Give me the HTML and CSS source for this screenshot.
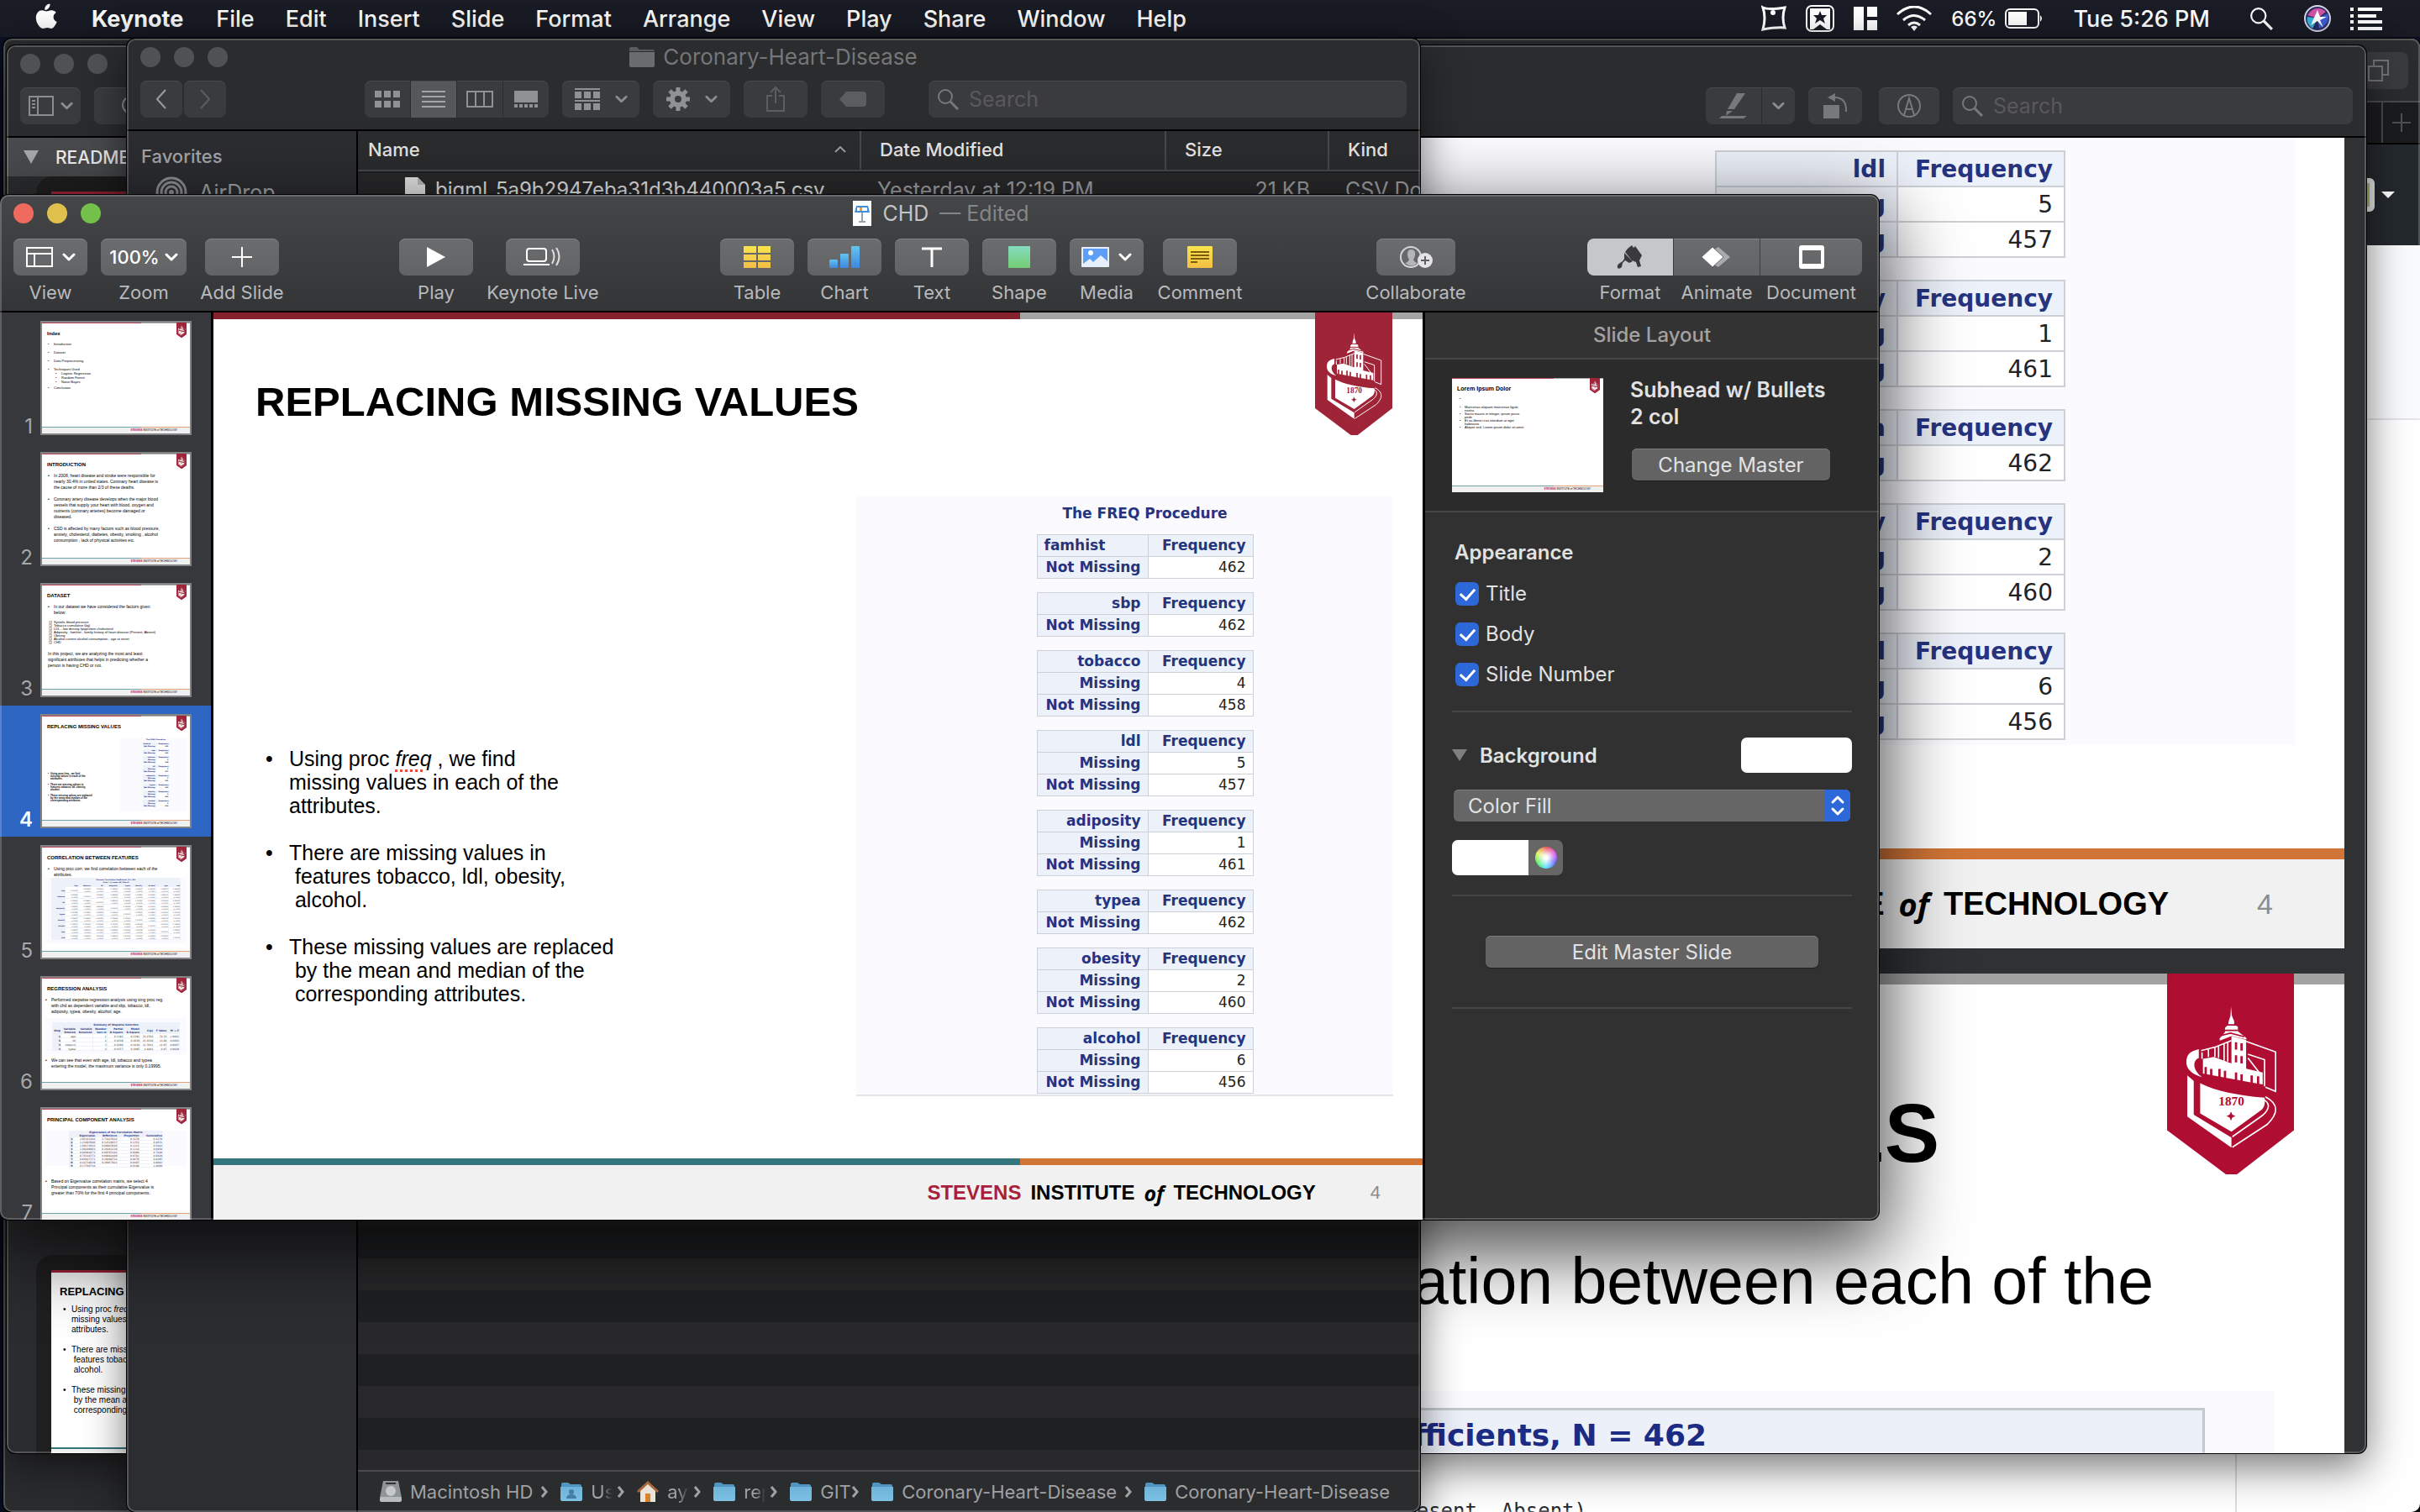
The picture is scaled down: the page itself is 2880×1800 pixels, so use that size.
FILE: index.html
```html
<!DOCTYPE html>
<html lang="en">
<head>
<meta charset="utf-8">
<title>Keynote - CHD</title>
<link rel="stylesheet" href="styles.css">
</head>
<body>
<svg class="defs" width="0" height="0" aria-hidden="true">
  <defs>
    <linearGradient id="gFolder" x1="0" y1="0" x2="0" y2="1"><stop offset="0" stop-color="#6fb3d9"/><stop offset="1" stop-color="#7cc0e4"/></linearGradient>
    <linearGradient id="gYellow" x1="0" y1="0" x2="0" y2="1"><stop offset="0" stop-color="#fae54d"/><stop offset="1" stop-color="#f4bd45"/></linearGradient>
    <linearGradient id="gBlue" x1="0" y1="0" x2="0" y2="1"><stop offset="0" stop-color="#63c5ee"/><stop offset="1" stop-color="#3f86e0"/></linearGradient>
    <linearGradient id="gGreen" x1="0" y1="0" x2="0" y2="1"><stop offset="0" stop-color="#85dcc0"/><stop offset="1" stop-color="#74cc74"/></linearGradient>
    <symbol id="ribbon" viewBox="0 0 276 438" preserveAspectRatio="none">
      <path fill="currentColor" d="M0 0h276v342L152 438h-24L0 342z"/>
      <g fill="#fff">
        <path d="M139 72l2 20 5 12 0 8 8 4 0 10 18 14 1 4-32-8-26 10-1-4 12-14 0-10 7-6 1-8 4-12z"/>
        <path d="M140 136l32 9v64l-32-9z"/>
        <path d="M69 165C52 170 42 174 42 194c0 14 12 26 34 32-20-14-22-36-7-42z"/>
        <path d="M78 186l24-4 38 14 34 12 34 8v26l-24-4-106-20z"/>
        <path d="M44 222l14 12 0 74 82 50v22L44 312z"/>
        <path d="M72 239c36 18 80 26 140 32 2 12 0 20-6 26l-66 48-68-40z"/>
      </g>
      <g fill="none" stroke="#fff" stroke-width="3">
        <path d="M74 168l32-8 34-14M76 172l0 14M90 166v16M104 160v22M112 158v26M124 152v38M132 150v42"/>
        <path d="M172 148l64 23v86l-22-9M176 176l36 12v58M176 184l26 34"/>
        <path d="M214 269c30 16 28 36 4 60l-76 50M212 276c16 10 6 26-8 36l-62 44"/>
      </g>
      <g fill="none" stroke="currentColor" stroke-width="5">
        <path d="M150 150v16M162 152v16M150 178v16M162 180v16M84 204v16M96 208v14M114 208v18M126 212v18M150 216v18M162 220v16M184 222v18M198 224v18"/>
        <path d="M128 112h22M124 124h30M114 136l24-6 30 8" stroke-width="3"/>
      </g>
      <text x="140" y="288" text-anchor="middle" font-family="Liberation Serif, serif" font-weight="700" font-size="28" fill="currentColor">1870</text>
      <path fill="currentColor" d="M139 301l3 7 7 3-7 3-3 7-3-7-7-3 7-3z"/>
    </symbol>
    <symbol id="folder" viewBox="0 0 26 22"><path fill="#4f97c2" d="M1 2q0-2 2-2h6l3 2h11q2 0 2 2v4H1z"/><path fill="url(#gFolder)" d="M0 5h26v15q0 2-2 2H2q-2 0-2-2z"/></symbol>
    <symbol id="chev" viewBox="0 0 16 10"><path fill="none" stroke="currentColor" stroke-width="3" stroke-linecap="round" stroke-linejoin="round" d="M2 2l6 6 6-6"/></symbol>
    <symbol id="mag" viewBox="0 0 26 26"><circle cx="10" cy="10" r="8" fill="none" stroke="currentColor" stroke-width="2"/><path stroke="currentColor" stroke-width="3" d="M16 16l9 9"/></symbol>
    <symbol id="sep" viewBox="0 0 8 14"><path fill="none" stroke="currentColor" stroke-width="3" d="M1 1l5 6-5 6"/></symbol>
  </defs>
</svg>

<header class="menubar">
  <nav class="menus">
    <svg class="apple" viewBox="0 0 26 32" width="26" height="32"><path fill="#fff" d="M17.500 0.500c.3 2-.6 4-1.800 5.400-1.200 1.300-2.800 2-4.400 1.900-.3-2 .6-3.900 1.700-5.200C14.200 1.300 16 .5 17.500.5zM24.800 11c-2 1.200-3.200 3-3.200 5.300 0 2.700 1.600 4.800 4 5.700-1.200 3.600-4 8-6.600 8-1.600 0-2.600-1-4.800-1-2.200 0-3.300 1-4.800 1C5.800 30 .8 23.500.8 17.200c0-5.600 3.500-9 7.200-9 2 0 4 1.300 5.300 1.300 1.200 0 3.500-1.500 6.100-1.300 2.200.1 4.200 1 5.400 2.800z"/></svg>
    <a href="#" class="app">Keynote</a><a href="#">File</a><a href="#">Edit</a><a href="#">Insert</a><a href="#">Slide</a><a href="#">Format</a><a href="#">Arrange</a><a href="#">View</a><a href="#">Play</a><a href="#">Share</a><a href="#">Window</a><a href="#">Help</a>
  </nav>
  <div class="status">
    <svg width="30" height="32" viewBox="0 0 30 32"><path fill="none" stroke="#fff" stroke-width="3" d="M2 3q6 3 26 0-4 12 0 24-10-1-26 2 4-14 0-26z"/><circle cx="14" cy="9" r="3" fill="#fff"/></svg>
    <svg width="34" height="32" viewBox="0 0 34 32"><rect x="1" y="1" width="32" height="30" rx="6" fill="none" stroke="#fff" stroke-width="2"/><path fill="#fff" d="M5 4h24v25H25l-8-6-8 6H5z"/><path fill="#1a1d26" d="M17 7l2 5h6l-4 4 2 6-6-4-6 4 2-6-4-4h6z"/></svg>
    <svg width="28" height="28" viewBox="0 0 28 28"><path fill="#fff" d="M0 0h12v28H0zM16 0h12v12H16zM16 16h12v12H16z"/></svg>
    <svg width="42" height="30" viewBox="0 0 42 30"><g fill="none" stroke="#fff" stroke-width="3"><path d="M1 10q20-18 40 0M8 17q13-11 26 0M14 23q7-6 14 0"/></g><path fill="#fff" d="M17 25q4-3 8 0l-4 5z"/></svg>
    <span class="batt">66%<svg width="46" height="26" viewBox="0 0 46 26"><rect x="1" y="2" width="39" height="22" rx="5" fill="none" stroke="#fff" stroke-width="2"/><path fill="#fff" d="M4 5h22v16H4zM42 9q4 4 0 8z"/></svg></span>
    <time>Tue 5:26 PM</time>
    <svg class="lens" width="28" height="28"><use href="#mag"/></svg>
    <svg width="32" height="32" viewBox="0 0 32 32"><circle cx="16" cy="16" r="15" fill="#2b2d63" stroke="#d8d8e8" stroke-width="2"/><path fill="#d252a6" d="M4 12q10-14 22-4l-10 8z"/><path fill="#35b6dc" d="M4 14l12 2-6 12q-8-6-6-14z"/><path fill="#3c5fd6" d="M16 16l12-6q4 12-10 18z"/><path fill="#fff" d="M8 24l8-18 3 8 8 0-8 4 4 9-7-8z"/></svg>
    <svg width="38" height="28" viewBox="0 0 38 28"><path stroke="#fff" stroke-width="4" d="M0 3h4M9 3h29M0 11h4M9 11h22M0 18h4M9 18h29M0 26h4M9 26h29"/></svg>
  </div>
</header>

<main class="desktop">
  <!-- Browser window -->
  <section class="window browser">
    <div class="b-tools"><button aria-label="Show tabs"><svg width="26" height="26" viewBox="0 0 26 26"><path fill="none" stroke="#737476" stroke-width="2" d="M1 8h16v17H1zM7 8V1h17v17h-7"/></svg></button></div>
    <div class="b-tabs"><button aria-label="New tab"><svg width="22" height="22" viewBox="0 0 22 22"><path stroke="#4e4f51" stroke-width="2" d="M11 0v22M0 11h22"/></svg></button></div>
    <div class="b-head"><span class="avatar"></span><svg width="16" height="8" viewBox="0 0 16 8"><path fill="#fff" d="M0 0h16L8 8z"/></svg></div>
    <div class="b-repo"></div>
    <div class="b-page"><pre>famhist - family history of heart disease (Present, Absent)</pre></div>
  </section>

  <!-- Second Finder window, almost fully covered -->
  <section class="window under"></section>

  <!-- Preview window -->
  <section class="window preview">
    <div class="p-tools">
      <div class="lights"><i></i><i></i><i></i></div>
      <div class="p-row">
        <button class="tool" aria-label="Sidebar"><svg width="30" height="24" viewBox="0 0 30 24"><path fill="none" stroke="#8b8c8e" stroke-width="2" d="M1 1h28v22H1zM11 1v22M4 6h4M4 10h4M4 14h4"/></svg><svg class="c" width="15" height="10"><use href="#chev"/></svg></button>
        <button class="tool zoomout" aria-label="Zoom out"><svg width="26" height="26" viewBox="0 0 26 26"><circle cx="12" cy="12" r="10" fill="none" stroke="#8b8c8e" stroke-width="2"/><path stroke="#8b8c8e" stroke-width="2" d="M7 12h10"/></svg></button>
        <span class="grow"></span>
        <span class="split"><button class="tool" aria-label="Highlight"><svg width="36" height="32" viewBox="0 0 36 32"><path fill="#77787a" d="M22 1h10L19 20h-8zM10 22h7l-8 6zM4 28h30l-4 3H1z"/></svg></button><button class="tool" aria-label="Highlight colors"><svg class="c" width="15" height="10"><use href="#chev"/></svg></button></span>
        <button class="tool rot" aria-label="Rotate"><svg width="30" height="30" viewBox="0 0 30 30"><path fill="#77787a" d="M1 14h19v16H1zM6 5l9-5v10z"/><path fill="none" stroke="#77787a" stroke-width="2" d="M14 5q15 0 14 17"/></svg></button>
        <button class="tool mark" aria-label="Markup"><svg width="30" height="30" viewBox="0 0 30 30"><circle cx="15" cy="15" r="13" fill="none" stroke="#77787a" stroke-width="2"/><path fill="none" stroke="#77787a" stroke-width="2" d="M9 26l6-20 6 20M11 19h8"/></svg></button>
        <label class="search"><svg width="26" height="26"><use href="#mag"/></svg><input type="search" placeholder="Search" aria-label="Search document"></label>
      </div>
    </div>
    <div class="p-body">
      <aside class="p-side">
        <div class="p-file"><svg width="18" height="16" viewBox="0 0 18 16"><path fill="#a9aaab" d="M0 0h18L9 16z"/></svg>README</div>
        <div class="p-thumbs">
          <div class="p-thumb"><div class="p-slide"><h4>DATASET</h4></div></div>
          <div class="p-thumb"><div class="p-slide"><h4>REPLACING MISSING VALUES</h4>
            <ul><li>Using proc <em>freq</em> , we find<br>missing values in each of the<br>attributes.</li><li>There are missing values in<br>&nbsp;features tobacco, ldl, obesity,<br>&nbsp;alcohol.</li><li>These missing values are replaced<br>&nbsp;by the mean and median of the<br>&nbsp;corresponding attributes.</li></ul>
            <div class="p-foot"></div></div></div>
        </div>
      </aside>
      <div class="p-view">
        <article class="page">
          <div class="p-fig freq big" data-from="3"></div>
          <footer class="brandline"><span class="brand"><b class="red">STEVENS</b><b>INSTITUTE</b><i>of</i><b>TECHNOLOGY</b></span><span class="num">4</span></footer>
        </article>
        <article class="page two">
          <svg class="ribbon"><use href="#ribbon"/></svg>
          <h2>CORRELATION BETWEEN FEATURES</h2>
          <p>Using proc corr, we find correlation between each of the</p>
          <div class="p-corr"><div>Pearson Correlation Coefficients, N = 462</div></div>
        </article>
      </div>
    </div>
  </section>

  <!-- Finder window -->
  <section class="window finder">
    <div class="f-tools">
      <div class="f-title"><div class="lights"><i></i><i></i><i></i></div><h1><svg width="30" height="24" viewBox="0 0 30 24"><path fill="#5a5b5d" d="M0 2q0-2 2-2h7l3 3h16q2 0 2 2H0z"/><path fill="#6b6c6e" d="M0 6h30v16q0 2-2 2H2q-2 0-2-2z"/></svg>Coronary-Heart-Disease</h1></div>
      <div class="f-row">
        <span class="pair"><button class="tool" aria-label="Back"><svg width="12" height="24" viewBox="0 0 12 24"><path fill="none" stroke="#9a9b9d" stroke-width="2" d="M11 1L1 12l10 11"/></svg></button><button class="tool" aria-label="Forward"><svg width="12" height="24" viewBox="0 0 12 24"><path fill="none" stroke="#5c5d5f" stroke-width="2" d="M1 1l10 11L1 23"/></svg></button></span>
        <span class="split views">
          <button class="tool" aria-label="Icons"><svg width="30" height="20" viewBox="0 0 30 20"><path fill="#909193" d="M0 0h8v8H0zM11 0h8v8h-8zM22 0h8v8h-8zM0 12h8v8H0zM11 12h8v8h-8zM22 12h8v8h-8z"/></svg></button>
          <button class="tool on" aria-label="List"><svg width="28" height="20" viewBox="0 0 28 20"><path stroke="#a4a5a7" stroke-width="2" d="M0 1h28M0 7h28M0 13h28M0 19h28"/></svg></button>
          <button class="tool" aria-label="Columns"><svg width="32" height="20" viewBox="0 0 32 20"><path fill="none" stroke="#909193" stroke-width="2" d="M1 1h30v18H1zM11 1v18M21 1v18"/></svg></button>
          <button class="tool" aria-label="Gallery"><svg width="28" height="20" viewBox="0 0 28 20"><path fill="#909193" d="M0 0h28v14H0zM0 16h4v4H0zM6 16h4v4H6zM12 16h4v4h-4zM18 16h4v4h-4zM24 16h4v4h-4z"/></svg></button>
        </span>
        <button class="tool wide" aria-label="Group"><svg width="30" height="26" viewBox="0 0 30 26"><path fill="#909193" d="M0 0h30v2H0zM0 4h8v8H0zM11 4h8v8h-8zM22 4h8v8h-8zM0 14h30v2H0zM0 18h8v8H0zM11 18h8v8h-8zM22 18h8v8h-8z"/></svg><svg class="c" width="15" height="10"><use href="#chev"/></svg></button>
        <button class="tool wide" aria-label="Actions"><svg width="28" height="28" viewBox="0 0 28 28"><circle cx="14" cy="14" r="7" fill="none" stroke="#909193" stroke-width="6"/><g stroke="#909193" stroke-width="5"><path d="M14 0v6M14 22v6M0 14h6M22 14h6M4 4l4 4M20 20l4 4M24 4l-4 4M4 24l4-4"/></g></svg><svg class="c" width="15" height="10"><use href="#chev"/></svg></button>
        <button class="tool share" aria-label="Share"><svg width="22" height="30" viewBox="0 0 22 30"><path fill="none" stroke="#5c5d5f" stroke-width="2" d="M7 11H1v18h20V11h-6M11 20V1M5 7l6-6 6 6"/></svg></button>
        <button class="tool share" aria-label="Tags"><svg width="32" height="18" viewBox="0 0 32 18"><path fill="#5c5d5f" d="M8 0h20q4 0 4 4v10q0 4-4 4H8L0 9z"/></svg></button>
        <label class="search"><svg width="26" height="26"><use href="#mag"/></svg><input type="search" placeholder="Search" aria-label="Search folder"></label>
      </div>
    </div>
    <div class="f-body">
      <aside class="f-side"><h2>Favorites</h2><a href="#"><svg width="38" height="38" viewBox="0 0 38 38"><g fill="none" stroke="#8e8f91" stroke-width="3"><circle cx="19" cy="19" r="17"/><circle cx="19" cy="19" r="12"/><circle cx="19" cy="19" r="7"/></g><circle cx="19" cy="19" r="3" fill="#8e8f91"/></svg>AirDrop</a></aside>
      <div class="f-list">
        <table class="files">
          <colgroup><col class="c1"><col class="c2"><col class="c3"><col class="c4"></colgroup>
          <thead><tr><th><span>Name<svg width="14" height="8" viewBox="0 0 14 8"><path fill="none" stroke="#9a9b9d" stroke-width="2" d="M1 7l6-6 6 6"/></svg></span></th><th>Date Modified</th><th>Size</th><th>Kind</th></tr></thead>
          <tbody><tr><td class="fname"><svg width="24" height="30" viewBox="0 0 24 30"><path fill="#e8e8e8" d="M0 0h15l9 9v21H0z"/><path fill="#bbb" d="M15 0v9h9z"/></svg>bigml_5a9b2947eba31d3b440003a5.csv</td><td>Yesterday at 12:19 PM</td><td class="size">21 KB</td><td>CSV Document</td></tr></tbody>
        </table>
        <nav class="path">
          <svg width="26" height="26" viewBox="0 0 26 26"><path fill="#8f9496" d="M4 0h18l4 20H0z"/><rect y="19" width="26" height="6" rx="2" fill="#b9bdbf"/><circle cx="13" cy="12" r="6" fill="#c6cacc"/><path fill="#333" d="M7 2h12v2H7z"/></svg><span>Macintosh HD</span><svg class="s"><use href="#sep"/></svg>
          <svg class="fo" viewBox="0 0 26 24"><use href="#folder" width="26" height="24"/><circle cx="13" cy="12" r="3" fill="#4480a6"/><path fill="#4480a6" d="M7 20q0-5 6-5t6 5z"/></svg><span class="cut">Users</span><svg class="s"><use href="#sep"/></svg>
          <svg width="26" height="26" viewBox="0 0 26 26"><path fill="#e9e4da" d="M4 11l9-9 9 9v14H4z"/><path fill="none" stroke="#a8683c" stroke-width="3" d="M1 13L13 2l12 11"/><path fill="#d9822b" d="M10 15h6v10h-6z"/></svg><span class="cut">ayush</span><svg class="s"><use href="#sep"/></svg>
          <svg class="fo"><use href="#folder"/></svg><span class="cut">repos</span><svg class="s"><use href="#sep"/></svg>
          <svg class="fo"><use href="#folder"/></svg><span class="cut git">GIT</span><svg class="s"><use href="#sep"/></svg>
          <svg class="fo"><use href="#folder"/></svg><span>Coronary-Heart-Disease</span><svg class="s"><use href="#sep"/></svg>
          <svg class="fo"><use href="#folder"/></svg><span>Coronary-Heart-Disease</span>
        </nav>
      </div>
    </div>
  </section>

  <!-- Keynote window -->
  <section class="window keynote">
    <div class="k-tools">
      <div class="k-title"><div class="lights active"><i></i><i></i><i></i></div><h1><svg width="22" height="30" viewBox="0 0 22 30"><path fill="#fff" d="M0 0h22v30H0z"/><path fill="#3d8fd6" d="M4 6h14l2 8H2z"/><path fill="#fff" d="M5 8h12v4H5z"/><path fill="#f0a030" d="M8 8h3v4H8z"/><path stroke="#8fa3b3" stroke-width="2" d="M11 14v10M7 25h8"/></svg><span>CHD</span><small>— Edited</small></h1></div>
      <div class="k-row">
        <div class="grp g1">
          <div class="item"><button aria-label="View" id="bV"><svg width="32" height="24" viewBox="0 0 32 24"><path fill="none" stroke="#fff" stroke-width="2" d="M1 1h30v22H1zM1 8h30M10 8v15"/></svg><svg width="16" height="10"><use href="#chev"/></svg></button><label for="bV">View</label></div>
          <div class="item z"><button id="bZ">100%<svg width="16" height="10"><use href="#chev"/></svg></button><label for="bZ">Zoom</label></div>
          <div class="item add"><button aria-label="Add Slide" id="bA"><svg width="24" height="24" viewBox="0 0 24 24"><path stroke="#fff" stroke-width="2" d="M12 0v24M0 12h24"/></svg></button><label for="bA">Add Slide</label></div>
        </div>
        <div class="grp g2">
          <div class="item"><button aria-label="Play" id="bP"><svg width="22" height="24" viewBox="0 0 22 24"><path fill="#fff" d="M0 0l22 12L0 24z"/></svg></button><label for="bP">Play</label></div>
          <div class="item"><button aria-label="Keynote Live" id="bL"><svg width="46" height="22" viewBox="0 0 46 22"><rect x="4" y="1" width="23" height="15" rx="3" fill="none" stroke="#fff" stroke-width="2"/><path stroke="#fff" stroke-width="2" d="M0 20h31"/><path fill="none" stroke="#ddd" stroke-width="2" d="M34 2q5 8 0 17M39 0q7 10 0 21"/></svg></button><label for="bL">Keynote Live</label></div>
        </div>
        <div class="grp g3">
          <div class="item"><button aria-label="Table" id="bT"><svg width="32" height="26" viewBox="0 0 32 26"><path fill="url(#gYellow)" d="M0 0h15v8H0zM17 0h15v8H17zM0 10h15v7H0zM17 10h15v7H17zM0 19h15v7H0zM17 19h15v7H17z"/></svg></button><label for="bT">Table</label></div>
          <div class="item"><button aria-label="Chart" id="bC"><svg width="36" height="26" viewBox="0 0 36 26"><g fill="url(#gBlue)"><rect y="16" width="10" height="10" rx="1"/><rect x="13" y="9" width="10" height="17" rx="1"/><rect x="26" width="10" height="26" rx="1"/></g></svg></button><label for="bC">Chart</label></div>
          <div class="item"><button aria-label="Text" id="bX"><svg width="26" height="24" viewBox="0 0 26 24"><path stroke="#fff" stroke-width="3" d="M1 2h24M13 2v22"/></svg></button><label for="bX">Text</label></div>
          <div class="item"><button aria-label="Shape" id="bS"><svg width="26" height="26"><rect width="26" height="26" rx="1" fill="url(#gGreen)"/></svg></button><label for="bS">Shape</label></div>
          <div class="item"><button aria-label="Media" id="bM"><svg width="33" height="24" viewBox="0 0 33 24"><rect width="33" height="24" rx="1" fill="#e6f0fc"/><path fill="#5e9df5" d="M2 2h29v15l-8-7-9 8-4-4-8 6z"/><circle cx="11" cy="7" r="3" fill="#fff"/></svg><svg width="16" height="10"><use href="#chev"/></svg></button><label for="bM">Media</label></div>
          <div class="item com"><button aria-label="Comment" id="bN"><svg width="30" height="26" viewBox="0 0 30 26"><rect width="30" height="26" rx="1" fill="url(#gYellow)"/><path stroke="#7a5c10" stroke-width="2" d="M4 7h22M4 11h22M4 15h22M4 19h8"/></svg></button><label for="bN">Comment</label></div>
        </div>
        <div class="grp g4">
          <div class="item collab"><button aria-label="Collaborate" id="bO"><svg width="40" height="28" viewBox="0 0 40 28"><circle cx="14" cy="14" r="12" fill="none" stroke="#d6d6d8" stroke-width="2"/><path fill="#b4b5b7" d="M14 5q6 0 5 7-1 4-2 5 1 3 5 4-7 7-15 0 4-1 5-4-2-3-2-6 0-6 4-6z"/><circle cx="31" cy="18" r="9" fill="#e4e4e6"/><path stroke="#5f6062" stroke-width="2" d="M31 13v10M26 18h10"/></svg></button><label for="bO">Collaborate</label></div>
        </div>
        <div class="grp g5">
          <div class="item fmt"><button aria-label="Format" id="bF"><svg width="32" height="28" viewBox="0 0 32 28"><path fill="#3a3a3c" d="M13 4l5-4 2 3 2-2 8 11-3 6 2 7-4 1-2-6-5-2-8-10z"/><path fill="#3a3a3c" d="M9 9l10 10-4 2-5-3-3 3-1 5q-3 3-5 1-1-4 3-6 4-2 5-5z"/></svg></button><label for="bF">Format</label></div>
          <div class="item ani"><button aria-label="Animate" id="bI"><svg width="36" height="24" viewBox="0 0 36 24"><path fill="#a9aaac" d="M20 0l14 12-14 12-5-3V3z"/><path fill="#fff" stroke="#6a6b6d" d="M13 0l13 12-13 12L0 12z"/></svg></button><label for="bI">Animate</label></div>
          <div class="item doc"><button aria-label="Document" id="bD"><svg width="30" height="28" viewBox="0 0 30 28"><path fill="#fff" fill-rule="evenodd" d="M3 0h24q3 0 3 3v22q0 3-3 3H3q-3 0-3-3V3q0-3 3-3zm1 6v16h22V6z"/></svg></button><label for="bD">Document</label></div>
        </div>
      </div>
    </div>
    <div class="k-body">
      <ol class="navi">
        <li><span>1</span><div class="thumb"><svg class="ribbon"><use href="#ribbon"/></svg><h3>Index</h3>
          <ul class="t1"><li>Introduction</li><li>Dataset</li><li>Data Preprocessing</li><li>Techniques Used<ul><li>Logistic Regression</li><li>Random Forest</li><li>Naive Bayes</li></ul></li><li>Conclusion</li></ul><div class="tf"><b>STEVENS</b> INSTITUTE of TECHNOLOGY</div></div></li>
        <li><span>2</span><div class="thumb"><svg class="ribbon"><use href="#ribbon"/></svg><h3>INTRODUCTION</h3>
          <ul class="t2"><li>In 2008, heart disease and stroke were responsible for<br>nearly 30.4% in united states. Coronary heart disease is<br>the cause of more than 2/3 of these deaths.</li><li>Coronary artery disease develops when the major blood<br>vessels that supply your heart with blood, oxygen and<br>nutrients (coronary arteries) become damaged or<br>diseased.</li><li>CSD is affected by many factors such as blood pressure,<br>anxiety, cholesterol, diabetes, obesity, smoking , alcohol<br>consumption , lack of physical activities etc.</li></ul><div class="tf"><b>STEVENS</b> INSTITUTE of TECHNOLOGY</div></div></li>
        <li><span>3</span><div class="thumb"><svg class="ribbon"><use href="#ribbon"/></svg><h3>DATASET</h3>
          <ul class="t2"><li>In our dataset we have considered the factors given<br>below:</li></ul>
          <ul class="t3"><li>Systolic blood pressure</li><li>Tobacco cumulative (kg)</li><li>LDL - low density lipoprotein cholesterol</li><li>Adiposity - famhist - family history of heart disease (Present, Absent)</li><li>Obesity</li><li>Alcohol current alcohol consumption - age at onset</li><li>CHD</li></ul>
          <p>In this project, we are analyzing the most and least<br>significant attributes that helps in predicting whether a<br>person is having CHD or not.</p><div class="tf"><b>STEVENS</b> INSTITUTE of TECHNOLOGY</div></div></li>
        <li class="sel"><span>4</span><div class="thumb"><svg class="ribbon"><use href="#ribbon"/></svg><h3>REPLACING MISSING VALUES</h3>
          <div class="t4"><ul><li>Using proc freq , we find<br>missing values in each of the<br>attributes.</li><li>There are missing values in<br>features tobacco, ldl, obesity,<br>alcohol.</li><li>These missing values are replaced<br>by the mean and median of the<br>corresponding attributes.</li></ul><div class="freq mini" data-from="0"><h4>The FREQ Procedure</h4></div></div><div class="tf"><b>STEVENS</b> INSTITUTE of TECHNOLOGY</div></div></li>
        <li><span>5</span><div class="thumb"><svg class="ribbon"><use href="#ribbon"/></svg><h3>CORRELATION BETWEEN FEATURES</h3>
          <ul class="t2 dot"><li>Using proc corr, we find correlation between each of the<br>attributes.</li></ul><div class="fig f5"><table id="corr"></table></div><div class="tf"><b>STEVENS</b> INSTITUTE of TECHNOLOGY</div></div></li>
        <li><span>6</span><div class="thumb"><svg class="ribbon"><use href="#ribbon"/></svg><h3>REGRESSION ANALYSIS</h3>
          <ul class="t2 dot out"><li>Performed stepwise regression analysis using sing proc reg.<br>with chd as dependent variable and sbp, tobacco, ldl,<br>adiposity, typea, obesity, alcohol, age.</li></ul><div class="fig f6"><table id="step"></table></div>
          <ul class="t2 dot out"><li>We can see that even with age, ldl, tobacco and typea<br>entering the model, the maximum variance is only 0.19995.</li></ul><div class="tf"><b>STEVENS</b> INSTITUTE of TECHNOLOGY</div></div></li>
        <li><span>7</span><div class="thumb"><svg class="ribbon"><use href="#ribbon"/></svg><h3>PRINCIPAL COMPONENT ANALYSIS</h3>
          <div class="fig f7"><table id="eigen"></table></div>
          <ul class="t2 dot out"><li>Based on Eigenvalue correlation matrix, we select 4<br>Principal components as their cumulative Eigenvalue is<br>greater than 70% for the first 4 principal components.</li></ul><div class="tf"><b>STEVENS</b> INSTITUTE of TECHNOLOGY</div></div></li>
      </ol>
      <article class="slide">
        <svg class="ribbon"><use href="#ribbon"/></svg>
        <h2>REPLACING MISSING VALUES</h2>
        <div class="s-body">
          <ul><li>Using proc <em>freq</em> , we find<br>missing values in each of the<br>attributes.</li><li>There are missing values in<br>&nbsp;features tobacco, ldl, obesity,<br>&nbsp;alcohol.</li><li>These missing values are replaced<br>&nbsp;by the mean and median of the<br>&nbsp;corresponding attributes.</li></ul>
          <div class="freq main" data-from="0"><h4>The FREQ Procedure</h4></div>
        </div>
        <footer class="brandline"><span class="brand"><b class="red">STEVENS</b><b>INSTITUTE</b><i>of</i><b>TECHNOLOGY</b></span><span class="num">4</span></footer>
      </article>
      <aside class="insp">
        <h2>Slide Layout</h2>
        <div class="master">
          <div class="thumb plain"><svg class="ribbon"><use href="#ribbon"/></svg><h3>Lorem Ipsum Dolor</h3><ul class="tm"><li></li><li>Maecenas aliquam maecenas ligula<br>nostra</li><li>Sociis mauris in integer, ipsum purus<br>pede</li><li>Et eu libero cras interdum at eget<br>habitasse</li><li>Aliquet sed. Lorem ipsum dolor sit amet</li></ul><div class="tf"><b>STEVENS</b> INSTITUTE of TECHNOLOGY</div></div>
          <div class="minfo"><strong>Subhead w/ Bullets 2 col</strong><button class="push">Change Master</button></div>
        </div>
        <div class="sect">
          <fieldset><legend>Appearance</legend>
            <label><input type="checkbox" checked>Title</label>
            <label><input type="checkbox" checked>Body</label>
            <label><input type="checkbox" checked>Slide Number</label>
          </fieldset>
          <div class="bg">
            <div class="bghead"><svg width="18" height="14" viewBox="0 0 18 14"><path fill="#808080" d="M0 0h18L9 14z"/></svg><h3>Background</h3><button class="well" aria-label="Current fill"></button></div>
            <div class="pop"><select aria-label="Fill type"><option>Color Fill</option></select><svg width="30" height="38" viewBox="0 0 30 38"><path fill="none" stroke="#fff" stroke-width="3" stroke-linecap="round" stroke-linejoin="round" d="M9 15l6-6 6 6M9 23l6 6 6-6"/></svg></div>
            <div class="color"><button class="chip" aria-label="Fill color"></button><button class="wheel" aria-label="Color picker"><i></i></button></div>
          </div>
          <div class="edit"><button class="push">Edit Master Slide</button></div>
        </div>
      </aside>
    </div>
  </section>
</main>
<script src="tables.js"></script>
</body>
</html>
```
FILE: tables.js
```js
const freq = [
  ['famhist', null, 462], ['sbp', null, 462], ['tobacco', 4, 458], ['ldl', 5, 457],
  ['adiposity', 1, 461], ['typea', null, 462], ['obesity', 2, 460], ['alcohol', 6, 456]
];
document.querySelectorAll('.freq').forEach(box => {
  freq.slice(+box.dataset.from).forEach(([name, miss, ok]) => {
    const rows = (miss === null ? '' : `<tr><th>Missing</th><td>${miss}</td></tr>`) +
      `<tr><th>Not Missing</th><td>${ok}</td></tr>`;
    box.insertAdjacentHTML('beforeend',
      `<table><thead><tr><th class="${name}">${name}</th><th>Frequency</th></tr></thead><tbody>${rows}</tbody></table>`);
  });
});

const names = ['sbp', 'tobacco', 'ldl', 'adiposity', 'typea', 'obesity', 'alcohol', 'age', 'chd'];
const upper = [
  ['0.21225', '0.15830', '0.35650', '-0.05745', '0.23807', '0.14010', '0.38877', '0.19235'],
  ['0.15891', '0.28664', '-0.01461', '0.12453', '0.20081', '0.45033', '0.29972'],
  ['0.44043', '0.04405', '0.33051', '-0.03340', '0.31180', '0.26305'],
  ['-0.04314', '0.71656', '0.10033', '0.62595', '0.25412'],
  ['0.07401', '0.03950', '-0.10261', '0.10316'],
  ['0.05162', '0.29178', '0.10010'], ['0.10112', '0.06253'], ['0.37297']
];
const cell = (r, c) => r === c ? '1.00000' : `${r < c ? upper[r][c - r - 1] : upper[c][r - c - 1]}<br>&lt;.0001`;
const row = (tag, cells) => `<tr>${cells.map((c, i) => i && tag === 'td' ? `<td>${c}</td>` : `<th>${c}</th>`).join('')}</tr>`;
document.getElementById('corr').innerHTML =
  '<tr><th colspan="10" class="cap">Pearson Correlation Coefficients, N = 462<br>Prob &gt; |r| under H0: Rho=0</th></tr>' +
  row('th', ['', ...names]) + names.map((n, r) => row('td', [n, ...names.map((_, c) => cell(r, c))])).join('');
document.getElementById('step').innerHTML =
  '<tr><th colspan="9" class="cap">Summary of Stepwise Selection</th></tr>' +
  row('th', ['Step', 'Variable<br>Entered', 'Variable<br>Removed', 'Number<br>Vars In', 'Partial<br>R-Square', 'Model<br>R-Square', 'C(p)', 'F Value', 'Pr &gt; F']) +
  [['1', 'age', '', '1', '0.1391', '0.1391', '33.2762', '74.33', '&lt;.0001'],
   ['2', 'ldl', '', '2', '0.0239', '0.1630', '21.0330', '13.08', '0.0003'],
   ['3', 'tobacco', '', '3', '0.0208', '0.1838', '11.7041', '11.67', '0.0007'],
   ['4', 'typea', '', '4', '0.0157', '0.1995', '4.8481', '8.97', '0.0029']].map(r => row('td', r)).join('');
document.getElementById('eigen').innerHTML =
  '<tr><th colspan="5" class="cap">Eigenvalues of the Correlation Matrix</th></tr>' +
  row('th', ['', 'Eigenvalue', 'Difference', 'Proportion', 'Cumulative']) +
  [['1', '2.95123302', '1.73425622', '0.3279', '0.3279'], ['2', '1.21697680', '0.12526037', '0.1352', '0.4631'],
   ['3', '1.09171643', '0.08925640', '0.1213', '0.5844'], ['4', '1.00246003', '0.20161130', '0.1114', '0.6958'],
   ['5', '0.80084873', '0.09765102', '0.0890', '0.7848'], ['6', '0.70319771', '0.09482400', '0.0781', '0.8629'],
   ['7', '0.60837371', '0.16098732', '0.0676', '0.9305'], ['8', '0.44738639', '0.26957921', '0.0497', '0.9802'],
   ['9', '0.17780718', '', '0.0198', '1.0000']].map(r => row('td', r)).join('');
```
FILE: styles.css
```css
* { box-sizing: border-box; }
body { margin: 0; height: 100vh; overflow: hidden; display: flex; flex-direction: column; background: #0b1226; font-family: Inter, "Liberation Sans", sans-serif; color: #ddd; }
h1, h2, h3, h4, p, ul, ol, pre, fieldset { margin: 0; padding: 0; border: 0; }
ul, ol { list-style: none; }
a { color: inherit; text-decoration: none; }
button, input, select { font: inherit; color: inherit; border: 0; margin: 0; padding: 0; background: none; }
table { border-collapse: collapse; }
svg { flex: none; display: block; }
.defs { position: absolute; }

/* Menu bar */
.menubar { height: 44px; flex: none; display: flex; justify-content: space-between; align-items: center; padding: 0 45px 0 42px; background: #1a1d26; color: #fff; font-size: 27px; font-weight: 500; white-space: nowrap; }
.menus { display: flex; align-items: center; gap: 37px; }
.menus .app { font-weight: 700; margin: 0 2px 0 4px; }
.apple { margin-bottom: 4px; }
.status { display: flex; align-items: center; gap: 23px; }
.batt { display: flex; align-items: center; gap: 10px; font-size: 24px; }
.status time { font-size: 27px; margin-left: 12px; }
.lens { margin: 0 14px 0 24px; }

/* Windows */
.desktop { flex: 1; position: relative; }
.window { position: absolute; display: flex; flex-direction: column; overflow: hidden; border-radius: 10px; background: #2b2c2e; box-shadow: 0 0 0 1px #000, 0 16px 50px rgba(0,0,0,.55); }
.window::after { content: ""; position: absolute; inset: 0; border-radius: 10px; border: 2px solid rgba(255,255,255,.2); pointer-events: none; }
.lights { display: flex; gap: 16px; }
.lights i { width: 24px; height: 24px; border-radius: 50%; background: #505153; }
.lights.active i:nth-child(1) { background: #ee6a5f; }
.lights.active i:nth-child(2) { background: #dfc04c; }
.lights.active i:nth-child(3) { background: #73c04b; }
.tool { height: 44px; display: flex; align-items: center; justify-content: center; background: #3a3b3d; border-radius: 8px; color: #8b8c8e; box-shadow: inset 0 1px #48494b; }
.split { display: flex; gap: 1px; }
.split .tool { border-radius: 0; }
.split .tool:first-child { border-radius: 8px 0 0 8px; }
.split .tool:last-child { border-radius: 0 8px 8px 0; }
.search { height: 44px; display: flex; align-items: center; gap: 12px; padding: 0 10px; background: #3a3b3d; border-radius: 8px; box-shadow: inset 0 1px #48494b; color: #77787a; font-size: 25px; }
.search input { flex: 1; min-width: 0; outline: 0; }
.search input::placeholder { color: #59595c; opacity: 1; }
.grow { flex: 1; }

/* Browser */
.browser { left: 4px; right: 0; top: 2px; bottom: 0; background: #fff; }
.b-tools { height: 76px; flex: none; padding: 16px 14px; display: flex; justify-content: flex-end; background: #2b2c2e; border-bottom: 2px solid #4a4b4d; }
.b-tools button { width: 80px; height: 44px; background: #3a3b3d; border-radius: 8px; display: flex; align-items: center; padding-left: 32px; }
.b-tabs { height: 50px; flex: none; background: #1b1c1e; border-bottom: 2px solid #000; display: flex; justify-content: flex-end; }
.b-tabs button { width: 46px; border-left: 2px solid #48494b; display: flex; align-items: center; justify-content: center; }
.b-head { height: 120px; flex: none; background: #24292e; display: flex; justify-content: flex-end; align-items: center; gap: 8px; padding-right: 30px; }
.avatar { width: 40px; height: 40px; border-radius: 6px; background: #a9b86a; border: 6px solid #e4e6e4; }
.b-repo { height: 208px; flex: none; background: #fafbfc; border-bottom: 2px solid #e1e4e8; }
.b-page { flex: 1; margin-right: 218px; border-right: 2px solid #ddd; display: flex; align-items: flex-end; }
.b-page pre { width: 1884px; text-align: right; font: 24px/28px "DejaVu Sans Mono", monospace; color: #24292e; margin-bottom: -13px; }
.under { left: 4px; right: 60%; top: 2px; bottom: 0; box-shadow: 0 0 0 1px #000; }

/* Preview */
.preview { left: 8px; right: 64px; top: 10px; bottom: 70px; }
.p-tools { flex: none; height: 110px; padding: 10px 16px 16px; border-bottom: 2px solid #000; }
.p-row { display: flex; margin-top: 16px; }
.p-row .tool:first-child { width: 72px; gap: 8px; }
.p-row .zoomout { width: 90px; margin-left: 16px; }
.p-row .split .tool:first-child { width: 66px; }
.p-row .split .tool:last-child { width: 39px; }
.rot { width: 64px; margin-left: 16px; }
.mark { width: 72px; margin: 0 16px 0 20px; }
.p-row .search { width: 476px; }
.p-body { flex: 1; min-height: 0; display: flex; }
.p-side { width: 352px; flex: none; display: flex; flex-direction: column; }
.p-file { height: 46px; flex: none; background: #4a4b4d; color: #f2f2f2; font-size: 21px; font-weight: 500; display: flex; align-items: center; gap: 20px; padding-left: 20px; }
.p-thumbs { flex: 1; display: flex; flex-direction: column; justify-content: space-between; padding-left: 35px; }
.p-thumb { width: 300px; height: 236px; padding: 18px 18px 0; background: #1f1f20; border-radius: 20px 20px 0 0; }
.p-slide { height: 218px; background: #fff; border-top: 3px solid #a4243a; color: #000; font-family: "Liberation Sans", sans-serif; display: flex; flex-direction: column; }
.p-slide h4 { font-size: 13px; line-height: 16px; margin: 15px 0 7px 10px; white-space: nowrap; }
.p-slide ul { font-size: 10px; line-height: 12px; padding-left: 24px; white-space: nowrap; }
.p-slide li { margin-bottom: 12px; }
.p-slide li::before { content: "•"; float: left; margin-left: -10px; }
.p-foot { margin-top: auto; height: 7px; border-top: 2px solid #34767b; background: #f1f1f1; }
.p-view { flex: 1; min-width: 0; background: #2f3133; padding: 0 26px 0 20px; overflow: hidden; display: flex; flex-direction: column; gap: 30px; }
.page { flex: none; background: #fff; position: relative; color: #000; font-family: "Liberation Sans", sans-serif; }
.p-fig { height: 723px; margin-right: 58px; margin-bottom: 123px; padding: 15px 274px 0 0; }
.page .brandline { height: 119px; border-top-width: 13px; border-image: linear-gradient(#d17537, #d17537) 1; padding: 0 85px 0 0; }
.page .brand { font-size: 38px; gap: 17px; margin-right: 105px; }
.page .brand i { font-size: 38px; }
.page .num { font-size: 34px; }
.page.two { border-top: 13px solid #a3a3a3; height: 700px; }
.page .ribbon { position: absolute; right: 60px; top: -13px; width: 151px; height: 239px; color: #b00d33; }
.page h2 { font-size: 98px; line-height: 112px; padding: 121px 482px 0 0; text-align: right; white-space: nowrap; }
.page p { font-size: 77px; line-height: 88px; margin-top: 76px; padding-right: 227px; text-align: right; white-space: nowrap; }
.p-corr { margin: 87px 83px 0 0; background: #fafaff; padding: 20px 83px 0 0; }
.p-corr div { height: 90px; border: 3px solid #c5c8cc; background: #ecf0f8; color: #1c2b83; font: 700 36px/60px "DejaVu Sans", sans-serif; text-align: right; padding-right: 590px; white-space: nowrap; }

/* Frequency tables */
.freq { background: #fafaff; display: flex; flex-direction: column; align-items: center; font-family: "DejaVu Sans", sans-serif; color: #26337f; }
.freq table { table-layout: fixed; }
.freq th, .freq td { border: 1px solid #cdd0d6; text-align: right; padding: 0 8px; white-space: nowrap; }
.freq th { background: #edf1f9; }
.freq td { background: #fff; color: #222; }
.freq th.famhist { text-align: left; }
.freq.main { width: 639px; height: 715px; padding-left: 48px; border-bottom: 2px solid #e3e5ec; font-size: 17px; gap: 16px; }
.freq.main h4 { font-size: 17px; line-height: 22px; margin: 10px 0 -2px; }
.freq.main table { width: 258px; flex: none; }
.freq.main th, .freq.main td { height: 26px; line-height: 25px; }
.freq.main th:first-child { width: 132px; }
.freq.big { align-items: flex-end; font-size: 28px; gap: 26px; }
.freq.big table { width: 417px; flex: none; }
.freq.big th, .freq.big td { height: 42px; line-height: 39px; border-width: 2px; padding: 0 13px; }
.freq.big th:first-child { width: 216px; }
.freq.mini { width: 79px; height: 88px; padding-left: 6px; font-size: 2px; gap: 2px; }
.freq.mini h4 { font-size: 2px; line-height: 3px; margin: 1px 0 0; }
.freq.mini table { width: 32px; border-collapse: separate; border-spacing: 0; }
.freq.mini th, .freq.mini td { border-width: 0; padding: 0 1px; height: 3px; line-height: 3px; }

/* Finder */
.finder { left: 151px; right: 1190px; top: 2px; bottom: 0; }
.f-tools { flex: none; height: 110px; padding: 10px 16px; border-bottom: 2px solid #000; }
.f-title, .k-title { display: grid; grid-template: 24px / 1fr auto 1fr; align-items: center; }
.f-title h1 { font-size: 26px; line-height: 24px; font-weight: 400; color: #757678; display: flex; align-items: center; gap: 10px; }
.f-row { display: flex; margin-top: 16px; }
.pair { display: flex; gap: 2px; margin-right: 165px; }
.pair .tool { width: 50px; }
.views { margin-right: 16px; }
.views .tool { width: 54px; }
.views .on { background: #56575a; }
.wide { width: 92px; gap: 18px; margin-right: 16px; }
.share { width: 76px; margin-right: 16px; }
.share + .search { margin-left: 36px; flex: 1; }
.f-body { flex: 1; min-height: 0; display: flex; }
.f-side { width: 275px; flex: none; background: #2c2d31; border-right: 2px solid #000; padding: 16px 17px; }
.f-side h2 { font-size: 22px; line-height: 28px; font-weight: 500; color: #a5a6a8; }
.f-side a { display: flex; align-items: center; gap: 14px; font-size: 25px; color: #a5a6a8; margin: 10px 0 0 17px; }
.f-list { flex: 1; min-width: 0; display: flex; flex-direction: column; justify-content: space-between; background: repeating-linear-gradient(#29292b 0 38px, #1f2022 38px 76px) 0 50px; }
.files { width: 100%; table-layout: fixed; font-size: 22px; }
.c1 { width: 598px; } .c2 { width: 363px; } .c3 { width: 194px; }
.files th { height: 47px; background: #2b2c2e; text-align: left; font-weight: 500; color: #e6e6e6; border-bottom: 2px solid #48494b; border-left: 2px solid #48494b; padding: 0 0 2px 22px; }
.files th:first-child { border-left: 0; padding: 0 16px 2px 12px; }
.files th span { display: flex; justify-content: space-between; align-items: center; }
.files td { height: 44px; font-size: 25px; line-height: 30px; vertical-align: top; color: #a0a1a3; padding: 7px 0 0 20px; white-space: nowrap; overflow: hidden; }
.files .fname { color: #e6e6e6; display: flex; align-items: center; gap: 12px; padding: 0 0 0 56px; font-size: 24px; }
.files .size { text-align: right; padding-right: 22px; }
.path { height: 50px; flex: none; display: flex; align-items: center; background: #2b2c2e; border-top: 2px solid #4a4b4d; padding: 0 26px; font-size: 22px; color: #a0a1a3; white-space: nowrap; }
.path span { margin: 0 10px; }
.path .cut { width: 32px; overflow: hidden; margin-right: 6px; -webkit-mask-image: linear-gradient(90deg, #000 50%, transparent); mask-image: linear-gradient(90deg, #000 50%, transparent); }
.path .git { width: 36px; margin-right: 2px; -webkit-mask-image: none; mask-image: none; overflow: visible; }
.path .s { width: 8px; height: 14px; margin-right: 15px; }
.path .fo { width: 26px; height: 24px; }

/* Keynote */
.keynote { left: 0; right: 644px; top: 188px; bottom: 348px; box-shadow: 0 0 0 1px #000, 0 30px 90px 10px rgba(0,0,0,.7); }
.k-tools { flex: none; height: 140px; padding: 10px 20px 0 16px; background: linear-gradient(#454648, #343537); border-bottom: 2px solid #000; }
.k-title h1 { display: flex; align-items: center; gap: 13px; font-size: 25px; line-height: 24px; font-weight: 400; color: #c3c4c6; margin-left: 8px; }
.k-title small { font-size: 25px; color: #858688; }
.k-row { display: flex; margin-top: 18px; }
.grp { display: flex; gap: 16px; }
.g2 { margin-left: 143px; gap: 39px; } .g3 { margin-left: 167px; } .g4 { margin-left: 166px; } .g5 { margin-left: auto; gap: 1px; }
.item { width: 88px; display: flex; flex-direction: column; align-items: center; gap: 6px; font-size: 22px; line-height: 28px; color: #b9babc; white-space: nowrap; }
.item label { display: flex; justify-content: center; width: 100%; }
.item button { width: 100%; height: 44px; display: flex; align-items: center; justify-content: center; gap: 11px; border-radius: 8px; background: linear-gradient(#6b6c6e, #626365); box-shadow: inset 0 1px #818284; color: #fff; }
.z { width: 102px; } .z button { gap: 6px; font-weight: 500; }
.add { margin-left: 6px; }
.com { margin-left: 7px; }
.collab { width: 94px; }
.fmt { width: 102px; } .ani { width: 102px; } .doc { width: 121px; }
.fmt button { border-radius: 8px 0 0 8px; background: #c6c7c9; box-shadow: none; }
.ani button { border-radius: 0; } .doc button { border-radius: 0 8px 8px 0; }
.k-body { flex: 1; min-height: 0; display: flex; }

/* Slide navigator */
.navi { width: 254px; flex: none; background: #37383b; border-right: 3px solid #000; overflow: hidden; font-size: 24px; color: #a6a7a9; }
.navi > li { height: 156px; display: flex; align-items: flex-end; padding: 0 23px 10px 0; }
.navi > li > span { flex: 1; text-align: right; padding-right: 9px; line-height: 20px; }
.navi .sel { background: #2d66c3; color: #fff; font-weight: 600; }
.thumb { position: relative; width: 180px; height: 136px; flex: none; border: 2px solid #828283; background: linear-gradient(90deg, #b8475a 67%, #aaa 67%) 0 0 / 100% 1px no-repeat, #fff; color: #000; font-family: "Liberation Sans", sans-serif; display: flex; flex-direction: column; overflow: hidden; white-space: nowrap; }
.thumb.plain { border: 0; }
.thumb .ribbon { position: absolute; right: 4px; top: 0; width: 12px; height: 18px; color: #a0243a; }
.thumb h3 { font-size: 6px; line-height: 8px; margin: 9px 0 6px 6px; }
.thumb li::before { content: "•"; float: left; margin-left: -7px; }
.t1 { font-size: 4px; line-height: 10px; padding-left: 14px; margin-top: -2px; }
.t1 ul { line-height: 5px; padding-left: 9px; margin-top: -3px; }
.t2 { font-size: 5px; line-height: 7px; padding-left: 14px; }
.t2 li + li { margin-top: 7px; }
.t2.out { padding-left: 11px; }
.t3 { font-size: 4px; line-height: 4px; padding-left: 14px; margin: 6px 0 8px; }
.thumb .t3 li::before { content: "❑"; margin-left: -6px; }
.thumb p { font-size: 5px; line-height: 7px; margin-left: 7px; }
.t4 { display: flex; justify-content: space-between; align-items: flex-start; padding: 0 4px 0 10px; margin-top: 3px; }
.t4 ul { font-size: 3px; line-height: 3px; margin-top: 42px; }
.t4 li { margin-bottom: 4px; }
.thumb .t4 li::before { margin-left: -3px; }
.tf { margin-top: auto; flex: none; height: 8px; background: linear-gradient(90deg, #6fa3a6 67%, #e0a27a 67%) 0 0 / 100% 1px no-repeat, #f0f0f0; font: 3px/9px "Liberation Sans", sans-serif; text-align: right; padding-right: 15px; }
.tf b { color: #b52540; }
.fig { background: #fafaff; margin: 0 4px; display: flex; justify-content: center; align-items: flex-start; }
.fig table { font: 2px/3px "DejaVu Sans", sans-serif; color: #333; }
.fig th, .fig td { padding: 1px 1px 0; text-align: right; background: #fff; box-shadow: inset -1px -1px #eef1f7; }
.fig th { background: #edf1f9; color: #26337f; }
.fig .cap { text-align: center; }
.f5 table { width: 154px; } .f5 { height: 78px; overflow: hidden; }
.f6 { margin: 4px; padding: 5px 0; height: 43px; } .f6 table { width: 152px; font-size: 3px; line-height: 4px; }
.f7 { margin: 3px 4px 15px; height: 42px; } .f7 table { width: 112px; font-size: 3px; }
.thumb.plain h3 { font-size: 7px; }
.tm { font-size: 4px; line-height: 4px; padding-left: 15px; }
.tm li:first-child { height: 10px; }
.thumb .tm li::before { margin-left: -6px; }

/* Slide canvas */
.slide { flex: 1; min-width: 0; position: relative; display: flex; flex-direction: column; color: #000; font-family: "Liberation Sans", sans-serif; background: linear-gradient(90deg, #85222e 960px, #a3a3a3 960px) 0 0 / 100% 8px no-repeat, #fff; }
.slide > .ribbon { position: absolute; right: 36px; top: 0; width: 92px; height: 146px; color: #9f2438; }
.slide h2 { font-size: 49px; line-height: 56px; padding: 78px 50px 0; white-space: nowrap; }
.s-body { display: flex; justify-content: space-between; padding: 84px 35px 0 90px; }
.s-body > ul { font-size: 25px; line-height: 28px; margin-top: 299px; white-space: nowrap; }
.s-body li { margin-bottom: 28px; }
.s-body li::before { content: "•"; float: left; margin-left: -28px; }
.s-body em { text-decoration: underline dotted #ea4b3d 3px; text-underline-offset: 4px; }
.brandline { margin-top: auto; flex: none; height: 73px; background: #f1f1f1; border-top: 8px solid; border-image: linear-gradient(90deg, #34767b 960px, #d17537 960px) 1; display: flex; justify-content: flex-end; align-items: center; padding-right: 50px; }
.brand { display: flex; align-items: center; gap: 11px; font-size: 24px; margin-right: 65px; }
.brand i { font: italic 700 25px "Open Sans", sans-serif; }
.brand .red { color: #a9203a; }
.num { font-size: 22px; color: #8c8c8c; }

/* Inspector */
.insp { width: 543px; flex: none; border-left: 3px solid #000; background: #313131; font-size: 24px; color: #e2e2e2; }
.insp > h2 { height: 56px; font-size: 24px; line-height: 54px; font-weight: 500; color: #a2a2a2; text-align: center; background: #333; border-bottom: 2px solid #464646; }
.master { display: flex; gap: 32px; height: 182px; padding: 22px 32px; background: #2b2b2b; border-bottom: 2px solid #464646; }
.minfo { display: flex; flex-direction: column; align-items: flex-start; gap: 22px; }
.minfo strong { font-size: 25px; font-weight: 600; line-height: 32px; width: 250px; margin-top: -2px; }
.push { height: 38px; border-radius: 6px; background: #636363; box-shadow: inset 0 1px #7c7c7c, 0 1px 1px #1e1e1e; }
.minfo .push { width: 236px; margin-left: 2px; }
.sect { padding: 30px 32px; }
fieldset { display: flex; flex-direction: column; gap: 20px; padding-bottom: 29px; border-bottom: 2px solid #464646; }
legend { font-weight: 600; line-height: 36px; padding: 0 0 0 3px; margin-bottom: 17px; }
fieldset label { display: flex; align-items: center; gap: 8px; line-height: 28px; padding-left: 4px; }
input[type=checkbox] { appearance: none; width: 28px; height: 28px; border-radius: 6px; background: #2d67d8; display: grid; place-items: center; }
input[type=checkbox]::after { content: ""; width: 8px; height: 14px; border: solid #fff; border-width: 0 3px 3px 0; rotate: 42deg; margin-bottom: 4px; }
.bg { padding: 30px 0 23px; border-bottom: 2px solid #464646; }
.bghead { display: flex; align-items: center; gap: 15px; }
.bghead h3 { font-size: 24px; font-weight: 600; flex: 1; }
.well { width: 132px; height: 42px; border-radius: 7px; background: #fff; }
.pop { display: flex; margin: 20px 2px 22px; height: 38px; border-radius: 6px; overflow: hidden; background: #666; box-shadow: inset 0 1px #7c7c7c; }
.pop select { appearance: none; flex: 1; padding-left: 17px; }
.pop svg { background: #2d67d8; }
.color { display: flex; width: 132px; height: 42px; border-radius: 7px; overflow: hidden; background: #666; }
.chip { width: 91px; background: #fff; }
.wheel { flex: 1; display: grid; place-items: center; }
.wheel i { width: 26px; height: 26px; border-radius: 50%; background: radial-gradient(#fff 10%, transparent 75%), conic-gradient(#e44, #d4d, #55f, #4df, #4e5, #de4, #e44); }
.edit { padding: 47px 40px; border-bottom: 2px solid #464646; }
.edit .push { width: 100%; display: block; }
```
